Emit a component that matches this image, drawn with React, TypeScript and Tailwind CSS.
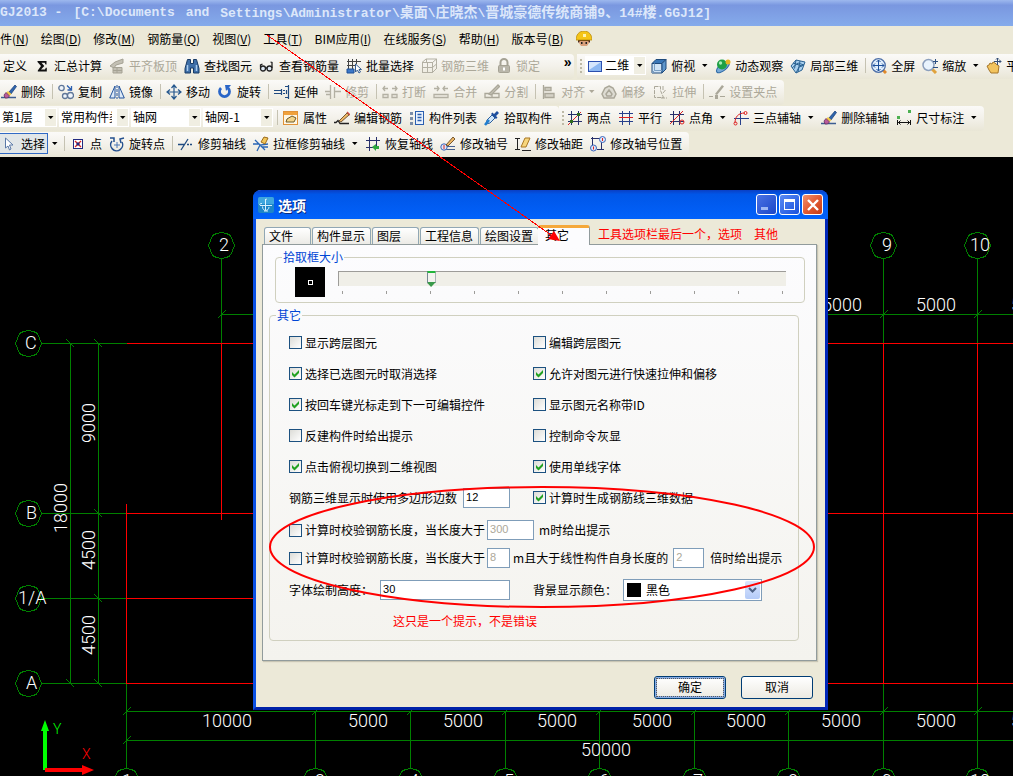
import React, { useState } from "react";
import clsx from "clsx";

const icons: Record<string, React.ReactNode> = {
  sigma: <path d="M3.500 3h9v3.500h-1l-.8-1.700H7.500L10.300 8l-3.300 3.500h4l.8-1.800h1v3.800h-9v-1L7 8 3.500 4z" fill="#111" />,
  align: (
    <g fill="#c3c0b4" stroke="#a5a294">
      <path d="M1 8l5-4 8-3v4L7 7l-2 3z" />
      <path d="M4 9.500h9v5.500H4zM4 12.500h9M8 10v5" />
    </g>
  ),
  binoculars: (
    <g fill="#3f6fa8" stroke="#173a66">
      <path d="M3.500 1.500h3v4h3v-4h3l2.500 9V15h-5.500v-5h-3v5H1v-4.500z" />
      <path d="M3.500 7v6M12.500 7v6" stroke="#a8cbee" strokeWidth="1.500" />
    </g>
  ),
  glasses: (
    <g fill="#dfe9f4" stroke="#222" strokeWidth="1.300">
      <circle cx="4" cy="10.500" r="2.500" />
      <circle cx="10.500" cy="10.500" r="2.500" />
      <path d="M6.500 10h2M1.500 9.500V7l2-1M13 10V4.500L11.500 4" fill="none" />
    </g>
  ),
  batch: (
    <g fill="none" stroke="#444">
      <path d="M2.500 1v14M6.500 1v10M10.500 1v5M1 3.500h14M1 7.500h9M1 11.500h7" />
      <path d="M1 11h7v4H1z" fill="#3c78c8" stroke="#1d4e96" />
      <path d="M9.500 6v8l2-2 1.500 3 1.500-1-1.500-2.500h2.500z" fill="#fff" stroke="#345c90" />
    </g>
  ),
  rebar3d: <path d="M1.500 4v11M6.500 4v11M11.500 4v11M15.500 1v10M5.500 1v3M1 4.500h10.500l4-3.500H5L1 4.500M1 9.500h10.500l4-3.500M1 14.500h10.500l4-4" fill="none" stroke="#b3b0a3" />,
  lock: (
    <g stroke="#a5a294">
      <path d="M4.500 8V4.500a3.500 3.500 0 017 0V8" fill="none" strokeWidth="2" />
      <rect x="2.500" y="7.500" width="11" height="7" rx="1" fill="#b9b6aa" />
      <path d="M8 9.500v3" stroke="#fff" strokeWidth="2" />
    </g>
  ),
  plane: (
    <>
      <rect x="1.500" y="3.500" width="13" height="10" fill="#8db8f2" stroke="#2b4fae" />
      <path d="M2 4h12L2 12z" fill="#d6e6fc" />
    </>
  ),
  cube: (
    <g stroke="#1e4a7c">
      <path d="M1 5.500h10V15H1z" fill="#cfe3f5" />
      <path d="M1 5.500L5 1.500h10l-4 4z" fill="#3a78b8" />
      <path d="M11 5.500l4-4V11l-4 4z" fill="#5f97cc" />
      <path d="M3.500 5.500V12.500H11M3.500 12.500L1 15" fill="none" stroke="#7aa0c4" />
    </g>
  ),
  orbit: (
    <>
      <ellipse cx="8" cy="9" rx="8" ry="3.500" transform="rotate(-40 8 9)" fill="#77a9d8" stroke="#2f6aa5" />
      <circle cx="7" cy="6.500" r="5" fill="#1fa045" />
      <circle cx="5.500" cy="5" r="1.700" fill="#a7ecb7" />
      <circle cx="13" cy="4" r="2.500" fill="#e6b422" />
    </>
  ),
  part3d: (
    <g fill="#a9d0ef" stroke="#2a6292">
      <path d="M1 8l5-6 9 2-3 8-6 3z" />
      <path d="M6 2L4.500 10.500M10 3L8 14M3 5l9 3M2 10l6-5 6 2M6 15l3-6 5-2" fill="none" />
    </g>
  ),
  fullscreen: (
    <>
      <path d="M12 12l3 3" stroke="#e08a2c" strokeWidth="3" />
      <circle cx="7.500" cy="7.500" r="6.800" fill="#e2effc" stroke="#4d6fa8" strokeWidth="1.300" />
      <path d="M7.500 2v11M2 7.500h11M5.500 4l2-2 2 2M5.500 11l2 2 2-2M4 5.500l-2 2 2 2M11 5.500l2 2-2 2" fill="none" stroke="#1d4f9a" />
    </>
  ),
  zoom: (
    <>
      <path d="M10 11l4 4" stroke="#e0a23c" strokeWidth="3" />
      <circle cx="6.500" cy="7" r="5.500" fill="#e9f3fd" stroke="#8c9fbd" strokeWidth="1.500" />
      <path d="M11 3.500h5M13.500 1v5M11 9.500h5" stroke="#2c4f82" />
    </>
  ),
  pan: (
    <>
      <path d="M1 8l2-1 1-2 2 1 1-2 2 1 1 1 3 2-1 7H5l-2-3z" fill="#f3c45e" stroke="#a5762a" />
      <path d="M11.500 0v7M8 3.500h7M10 1.500L11.500 0 13 1.500M13.500 2L15 3.500 13.500 5" fill="none" stroke="#334d75" />
    </>
  ),
  brush: (
    <>
      <path d="M0 13.500h15" stroke="#3d5d92" strokeWidth="1.500" />
      <path d="M8 8L14 1l1.500 1.500L10 10z" fill="#2e65ad" stroke="#173a72" strokeWidth=".7" />
      <path d="M7 7l3.500 3-2 2L5 9z" fill="#f1c84a" />
      <path d="M5 8.500l3.500 3.500-2 2H4L3 11z" fill="#b85a9c" stroke="#5b2450" strokeWidth=".7" />
    </>
  ),
  copy: (
    <g fill="#eef4fb" stroke="#5f7698" strokeWidth="1.300">
      <circle cx="3.500" cy="4" r="2.700" />
      <circle cx="7" cy="12" r="2.500" />
      <circle cx="12.500" cy="11.500" r="3" />
      <path d="M9 1.500l4 4M13.500 2v4h-4" fill="none" stroke="#2c5fb0" />
    </g>
  ),
  mirror: (
    <g fill="#dce9f8" stroke="#23539c">
      <path d="M6 2v12H.7zM10 2v12h5.300z" />
      <path d="M8 1v14" strokeDasharray="3 1" />
    </g>
  ),
  move: <path d="M8 1v14M1 8h14M5.500 4L8 1l2.500 3M5.500 12L8 15l2.500-3M4 5.500L1 8l3 2.500M12 5.500L15 8l-3 2.500" fill="none" stroke="#26588e" strokeWidth="1.200" />,
  rotate: (
    <>
      <path d="M4 4a5 5 0 107 0" fill="none" stroke="#2a66c8" strokeWidth="2.800" />
      <path d="M8 1h6l-5 6z" fill="#2a66c8" />
    </>
  ),
  extend: <path d="M0 6.500h7M0 9.500h7M7.500 5v6M9 6.500h2M9 9.500h2M12.500 6v4M14.500 1v14M11 2.500h3M11 13.500h3" fill="none" stroke="#1f4a80" strokeWidth="1.200" />,
  trim: <path d="M0 7.500h6M10 7.500h6M5.500 1v14M9.500 3v11M1 10.500h4" fill="none" stroke="#b3b0a3" strokeWidth="1.300" />,
  split: <path d="M1 4.500h5M3 2L1 4.500 3 7M10 4.500h5M13 2l2 2.500L13 7M1 10.500h5v3H1zM10 10.500h5v3h-5z" fill="none" stroke="#b3b0a3" strokeWidth="1.300" />,
  merge: <path d="M1 4.500h5M4 2l2 2.500L4 7M10 4.500h5M12 2l-2 2.500L12 7M1 10.500h14v3H1z" fill="none" stroke="#b3b0a3" strokeWidth="1.300" />,
  divide: (
    <g fill="none" stroke="#aaa799" strokeWidth="1.300">
      <path d="M1 9.500h14v4H1zM8 7v7" />
      <path d="M5 10l9-9 1.500 1.500L7 11z" fill="#c9c6ba" />
    </g>
  ),
  alignTo: <path d="M2.500 1v14M4 3.500h6v3H4zM4 9.500h9v4H4z" fill="#d5d2c7" stroke="#aaa799" strokeWidth="1.300" />,
  offset: (
    <g fill="none" stroke="#aaa799" strokeWidth="1.500">
      <path d="M8 2l4 2 3 6-2 4H3l-2-4 3-6z" fill="#dddbd2" />
      <path d="M8 6l3 4-1 2H6l-1-2z" />
    </g>
  ),
  stretch: <path d="M2.500 2.500h6v4l3 7h-9zM11 2v5M13.500 6l-2.500 3M9 14h6" fill="none" stroke="#aaa799" strokeDasharray="4 1" />,
  grip: (
    <g fill="#aaa799">
      <path d="M6 10l7-9 2 1.500L8 11z" />
      <path d="M0 12h4v1H0zM11 12h5v1h-5zM6 11h3v4H6z" />
    </g>
  ),
  property: (
    <>
      <rect x=".5" y="1.500" width="14" height="13" fill="#fff6e3" stroke="#e09238" />
      <path d="M1 2h13v3H1z" fill="#f0a13c" />
      <path d="M3 12l1-3 5-3 4 2-2 4H7z" fill="#f3d489" stroke="#6d5a2d" />
    </>
  ),
  editRebar: (
    <>
      <path d="M0 12.500h2l2-2 2 3h9" fill="none" stroke="#222" strokeWidth="1.300" />
      <path d="M5 11l8-8 2 2-8 7z" fill="#eeb765" stroke="#553a16" strokeWidth=".8" />
      <path d="M13 2l3 3" stroke="#c84f45" strokeWidth="1.500" />
    </>
  ),
  list: (
    <>
      <path d="M1 2h3v3H1zM1 7h3v3H1zM1 12h3v3H1z" fill="#7b8da8" />
      <rect x="6.500" y="1.500" width="8" height="13" fill="#eaf2fd" stroke="#2b5fb0" />
      <path d="M8.500 4.500h4M8.500 7.500h4M8.500 10.500h4" stroke="#2b5fb0" strokeWidth="1.500" />
    </>
  ),
  picker: (
    <>
      <path d="M2 14l1-4 5-5 3 3-5 5z" fill="#cfe5fa" stroke="#2c5f9c" />
      <path d="M7 4l5 5 1.500-1.500L12 6l3-3-2-2-3 3-1.500-1.500z" fill="#1f4f9e" />
      <path d="M1 15l4-5" stroke="#1f7ed0" strokeWidth="2.500" />
    </>
  ),
  twoPoint: (
    <g fill="none" stroke="#27306b">
      <path d="M4.500 1v14M11.500 1v14M1 4.500h14M1 11.500h14" />
      <path d="M1 15L14 2" stroke="#d22" />
      <path d="M10 3h3v3h-3zM3 10h3v3H3z" fill="#2f6a1f" stroke="none" />
    </g>
  ),
  parallel: (
    <g fill="none" stroke="#27408b">
      <path d="M4.500 1v14M11.500 1v14M1 11.500h14M1 3.500h14" />
      <path d="M1 7.500h14" stroke="#d22" />
    </g>
  ),
  pointAngle: (
    <g fill="none" stroke="#27306b">
      <path d="M4.500 1v14M10.500 1v14M1 4.500h14M1 11.500h14" />
      <path d="M1 14L14 1" stroke="#d22" />
      <circle cx="13" cy="12" r="2" stroke="#d22" />
    </g>
  ),
  threePoint: (
    <g fill="none" stroke="#27408b">
      <path d="M7.500 1v14M1 8.500h15" />
      <path d="M2 13c0-6 3-10 10-10" stroke="#d22" />
      <circle cx="2.500" cy="13.500" r="1.500" stroke="#d22" />
      <circle cx="12.500" cy="3" r="1.500" stroke="#d22" />
    </g>
  ),
  dimension: (
    <>
      <path d="M1 6h3v3H1zM12 0h3v3h-3z" fill="#4cb050" />
      <path d="M1.500 10v5M14.500 10v5M2 12.500h12M4.500 10.500l-2 2 2 2M11.500 10.500l2 2-2 2" fill="none" stroke="#111" />
    </>
  ),
  cursor: <path d="M4.500 2v10l2.500-2L8.500 14l1.500-1L8.500 9H12z" fill="#fff" stroke="#5a79a8" />,
  point: (
    <>
      <rect x="3.500" y="3.500" width="9" height="9" fill="#fff" stroke="#222a80" />
      <path d="M5 5l6 6M11 5l-6 6" stroke="#d22" strokeWidth="1.300" />
      <path d="M6.500 6.500h3v3h-3z" fill="#222a80" />
    </>
  ),
  rotatePoint: (
    <g fill="none" stroke="#24508f" strokeWidth="1.500">
      <path d="M3 5a6 6 0 1010 1" />
      <path d="M1 2h4v4M15 2l-4 1 1 4" />
      <path d="M8 6v6M5 9h6" stroke="#4a77b5" strokeWidth="1" />
    </g>
  ),
  trimAxis: (
    <g fill="none" stroke="#1f4a80" strokeWidth="1.300">
      <path d="M0 8.500h6M3 14L10 3" />
      <path d="M9 8.500h6" strokeDasharray="2 1" />
    </g>
  ),
  boxTrim: (
    <>
      <path d="M0 8h6l6 6M4 15l3-6 8-1M2 4l5 5M9 11h6" fill="none" stroke="#2a66b5" strokeWidth="1.300" />
      <path d="M8 6l3-5 4 1-3 6z" fill="#f2c659" stroke="#9b6a1b" />
    </>
  ),
  restore: (
    <>
      <path d="M4.500 1v14M11.500 1v9M1 4.500h14M1 11.500h8" fill="none" stroke="#27306b" />
      <path d="M7 11l4-3v2h3v3h-3v2z" fill="#2da83e" />
    </>
  ),
  axisNo: (
    <>
      <path d="M3 13.500h12M7 10.500h8" stroke="#46618f" />
      <circle cx="4" cy="11" r="3.200" fill="#dce8fa" stroke="#3c65b8" />
      <path d="M4 9v4" stroke="#d22" />
      <path d="M6 9l7-8 2 2-7 7z" fill="#eeb765" stroke="#553a16" strokeWidth=".8" />
    </>
  ),
  axisGap: (
    <>
      <path d="M2.500 2v12M0 2.500h5M0 13.500h5M7 14.500h9" stroke="#222" />
      <path d="M6 11l4-9h5l-4 9z" fill="#f7d67c" stroke="#a97722" />
    </>
  ),
  axisPos: (
    <g fill="#dce8fa" stroke="#3c65b8">
      <path d="M2.500 1v9M1 2.500h10M11.500 5v9M7 13.500h7" stroke="#27306b" />
      <circle cx="12.500" cy="3.500" r="3" />
      <circle cx="3.500" cy="12" r="3" />
      <path d="M12.500 2v3M3.500 10.500v3" stroke="#d22" />
    </g>
  ),
};

const Icon = ({ name }: { name: string }) => (
  <svg viewBox="0 0 16 16" className="h-4 w-4 shrink-0" aria-hidden="true">
    {icons[name]}
  </svg>
);

const Caret = ({ muted }: { muted?: boolean }) => (
  <svg viewBox="0 0 6 4" className={clsx("h-1 w-1.5 shrink-0", muted ? "fill-[#aca899]" : "fill-black")} aria-hidden="true">
    <path d="M0 0h5.500L2.750 3z" />
  </svg>
);

interface ToolProps {
  icon?: string;
  label: string;
  disabled?: boolean;
  menu?: boolean;
}
const Tool = ({ icon, label, disabled, menu }: ToolProps) => (
  <button disabled={disabled} className={clsx("mr-[7px] flex shrink-0 items-center gap-1 whitespace-nowrap", disabled && "text-[#aca899]")}>
    {icon && <Icon name={icon} />}
    {label}
    {menu && (
      <span className={disabled ? "-mr-px" : "ml-[3px]"}>
        <Caret muted={disabled} />
      </span>
    )}
  </button>
);

const Sep = () => <span className="mr-[5px] h-[15px] w-px shrink-0 bg-[#c5c2b2]" />;

const Grip = () => (
  <span className="mx-[3px] flex shrink-0 flex-col gap-0.5">
    {[0, 1, 2, 3].map((i) => (
      <span key={i} className="h-0.5 w-0.5 bg-[#bdb9a6]" />
    ))}
  </span>
);

const Combo = ({ label, value, className, icon }: { label: string; value: string; className: string; icon?: string }) => (
  <div className={clsx("relative flex h-[19px] shrink-0 items-center bg-white", className)}>
    {icon && (
      <span className="ml-0.5">
        <Icon name={icon} />
      </span>
    )}
    <select aria-label={label} className="h-full min-w-0 flex-1 appearance-none overflow-hidden pr-[17px] pb-0.5 pl-0.5">
      <option>{value}</option>
    </select>
    <span className="pointer-events-none absolute inset-y-px right-px flex w-[11px] items-center justify-center bg-[#f0eee2]">
      <Caret />
    </span>
  </div>
);

const Bar = ({ children, className }: { children: React.ReactNode; className?: string }) => (
  <div className={clsx("flex h-[25px] shrink-0 items-center bg-linear-to-b from-[#fbfaf8] via-[#f3f1ea] to-[#e9e6d6] pb-0.5", className)}>
    {children}
  </div>
);

const menus = ["件(N)", "绘图(D)", "修改(M)", "钢筋量(Q)", "视图(V)", "工具(T)", "BIM应用(I)", "在线服务(S)", "帮助(H)", "版本号(B)"];

const MenuLabel = ({ text }: { text: string }) => {
  const at = text.indexOf("(");
  return (
    <>
      {text.slice(0, at)}(<span className="underline">{text[at + 1]}</span>)
    </>
  );
};

const AppHeader = () => (
  <header className="bg-[#ece9d8]">
    <h1 className="flex h-[26px] items-center gap-[11px] overflow-hidden bg-linear-to-b from-[#9db8ee] via-[#7a97e0] via-20% to-[#85abeb] font-['Liberation_Mono','Noto_Sans_CJK_SC',monospace] text-[13px] font-bold whitespace-nowrap text-[#dce7fa]">
      <span>GJ2013 -</span>
      <span>[C:\Documents</span>
      <span>and</span>
      <span>
        Settings\Administrator\<span className="text-[14px]">桌面</span>\<span className="text-[14px]">庄晓杰</span>\
        <span className="text-[14px]">晋城豪德传统商铺</span>9<span className="text-[14px]">、</span>14#
        <span className="text-[14px]">楼</span>.GGJ12]
      </span>
    </h1>
    <nav className="flex h-[27px] items-center gap-3 pb-0.5 whitespace-nowrap">
      {menus.map((m) => (
        <button key={m}>
          <MenuLabel text={m} />
        </button>
      ))}
      <svg viewBox="0 0 16 16" className="h-4 w-4" aria-hidden="true">
        <path d="M3 8h10v4l-2 3H5l-2-3z" fill="#d9a07c" />
        <path d="M2 8h12v4l-2-2H4l-2 2z" fill="#4a2a1a" />
        <path d="M0 9c0-5 3-9 8-9s8 4 8 9z" fill="#f5c518" stroke="#b98a0c" strokeWidth=".8" />
        <path d="M7 3h3v3H7z" fill="#fff3b0" />
        <path d="M5 11h1.500v2H5zM9.500 11H11v2H9.500z" fill="#222" />
      </svg>
    </nav>

    <div className="flex h-[26px] items-end overflow-hidden">
      <Bar className="rounded-r pl-[3px]">
        <Tool label="定义" />
        <Tool icon="sigma" label="汇总计算" />
        <Tool icon="align" label="平齐板顶" disabled />
        <Tool icon="binoculars" label="查找图元" />
        <Tool icon="glasses" label="查看钢筋量" />
        <Tool icon="batch" label="批量选择" />
        <Tool icon="rebar3d" label="钢筋三维" disabled />
        <Tool icon="lock" label="锁定" disabled />
        <button className="ml-3.5 w-[13px] pb-2 font-['Liberation_Sans',sans-serif] text-[14px] leading-4 font-bold">»</button>
      </Bar>
      <Bar className="ml-[3px]">
        <Grip />
        <Combo label="视图维度" value="二维" icon="plane" className="mr-[5px] w-[61px]" />
        <Tool icon="cube" label="俯视" menu />
        <Tool icon="orbit" label="动态观察" />
        <Tool icon="part3d" label="局部三维" />
        <Sep />
        <Tool icon="fullscreen" label="全屏" />
        <Tool icon="zoom" label="缩放" menu />
        <Tool icon="pan" label="平移" />
      </Bar>
    </div>

    <div className="flex h-[26px] items-end overflow-hidden">
      <Bar className="rounded-r pl-px">
        <Tool icon="brush" label="删除" />
        <Sep />
        <Tool icon="copy" label="复制" />
        <Tool icon="mirror" label="镜像" />
        <Sep />
        <Tool icon="move" label="移动" />
        <Tool icon="rotate" label="旋转" />
        <Sep />
        <Tool icon="extend" label="延伸" />
        <Tool icon="trim" label="修剪" disabled />
        <Sep />
        <Tool icon="split" label="打断" disabled />
        <Tool icon="merge" label="合并" disabled />
        <Tool icon="divide" label="分割" disabled />
        <Sep />
        <Tool icon="alignTo" label="对齐" disabled menu />
        <Tool icon="offset" label="偏移" disabled />
        <Tool icon="stretch" label="拉伸" disabled />
        <Sep />
        <Tool icon="grip" label="设置夹点" disabled />
      </Bar>
    </div>

    <div className="flex h-[26px] items-end overflow-hidden">
      <Bar className="rounded-r">
        <Combo label="楼层" value="第1层" className="mr-0.5 w-[57px]" />
        <Combo label="构件类型" value="常用构件类型" className="mr-0.5 w-[70px]" />
        <Combo label="构件" value="轴网" className="mr-0.5 w-[70px]" />
        <Combo label="构件名称" value="轴网-1" className="mr-1 w-[70px]" />
        <Sep />
        <Tool icon="property" label="属性" />
        <Tool icon="editRebar" label="编辑钢筋" />
        <Tool icon="list" label="构件列表" />
        <Tool icon="picker" label="拾取构件" />
      </Bar>
      <Bar className="rounded-r">
        <Grip />
        <Tool icon="twoPoint" label="两点" />
        <Tool icon="parallel" label="平行" />
        <Tool icon="pointAngle" label="点角" menu />
        <Tool icon="threePoint" label="三点辅轴" menu />
        <Tool icon="brush" label="删除辅轴" />
        <Tool icon="dimension" label="尺寸标注" menu />
      </Bar>
    </div>

    <div className="flex h-[26px] items-end overflow-hidden">
      <Bar className="rounded-r">
        <button className="flex h-[21px] items-center gap-1 border border-l-0 border-[#316ac5] bg-[#e1e6e8] pr-0.5 pl-px whitespace-nowrap">
          <Icon name="cursor" />
          选择
        </button>
        <button aria-label="选择方式" className="mr-1.5 flex h-5 w-2.5 items-center justify-end">
          <Caret />
        </button>
        <Sep />
        <Tool icon="point" label="点" />
        <Tool icon="rotatePoint" label="旋转点" />
        <Sep />
        <Tool icon="trimAxis" label="修剪轴线" />
        <Tool icon="boxTrim" label="拉框修剪轴线" menu />
        <Tool icon="restore" label="恢复轴线" />
        <Tool icon="axisNo" label="修改轴号" />
        <Tool icon="axisGap" label="修改轴距" />
        <Tool icon="axisPos" label="修改轴号位置" />
      </Bar>
    </div>
  </header>
);

const columns = [
  { x: 126, name: "1", labelX: 122 },
  { x: 315, name: "3", labelX: 315 },
  { x: 410, name: "4", labelX: 409 },
  { x: 505, name: "5", labelX: 504 },
  { x: 599, name: "6", labelX: 599 },
  { x: 694, name: "7", labelX: 693 },
  { x: 788, name: "8", labelX: 788 },
  { x: 883, name: "9", labelX: 882 },
  { x: 977, name: "10", labelX: 970 },
];
const rows = [
  { y: 343, name: "C", labelX: 25 },
  { y: 513, name: "B", labelX: 26 },
  { y: 598, name: "1/A", labelX: 18 },
  { y: 683, name: "A", labelX: 26 },
];

const Ring = ({ x, y }: { x: number; y: number }) => (
  <polygon
    points="0,-13 5,-12 9,-10 11,-5 13,0 11,5 9,10 5,12 0,13 -5,12 -9,10 -11,5 -13,0 -11,-5 -9,-10 -5,-12"
    transform={`translate(${x} ${y})`}
  />
);

const Drawing = () => (
  <svg className="absolute inset-0 h-full w-full" aria-label="轴网">
    <g transform="translate(0.5 -156.5)" fill="none" shapeRendering="crispEdges">
      <g stroke="#008000">
        {rows.map((r) => (
          <React.Fragment key={r.name}>
            <Ring x={28} y={r.y} />
            <path d={`M41 ${r.y}H126M94 ${r.y - 4}l8 8`} />
          </React.Fragment>
        ))}
        <path d="M70 343V683M98 343V683M66 339l8 8M66 679l8 8" />
        <path d="M126 683V711M126 711H2000M126 740H2000M122 744l8-8M221 314H2000" />
        {columns.map((c) => (
          <React.Fragment key={c.name}>
            <Ring x={c.x} y={781} />
            <path d={`M${c.x} 711V768M${c.x - 4} 715l8-8`} />
          </React.Fragment>
        ))}
        {[221, 883, 977].map((x) => (
          <React.Fragment key={x}>
            <Ring x={x} y={245} />
            <path d={`M${x} 258V343M${x - 4} 318l8-8`} />
          </React.Fragment>
        ))}
        <path d="M883 683V711M977 683V711" />
      </g>
      <path d="M126 343H2000M126 513H2000M126 598H600M126 683H2000M126 503V683M221 343V519M883 343V683M977 343V683" stroke="#ff0000" />
    </g>
    <g transform="translate(0 -157)">
      <g className="fill-white font-['Roboto',sans-serif] text-[18px] font-light">
        <text x="219" y="251">2</text>
        <text x="882" y="251">9</text>
        <text x="970" y="251">10</text>
        {rows.map((r) => (
          <text key={r.name} x={r.labelX} y={r.y + 6}>{r.name}</text>
        ))}
        {columns.map((c) => (
          <text key={c.name} x={c.labelX} y={787}>{c.name}</text>
        ))}
        <text x="822" y="311">5000</text>
        <text x="916" y="311">5000</text>
        <text x="1011" y="311">5000</text>
        <text x="202" y="727">10000</text>
        {[348, 443, 537, 632, 726, 821, 916, 1011].map((x) => (
          <text key={x} x={x} y="727">5000</text>
        ))}
        <text x="581" y="756">50000</text>
        <text transform="translate(95 443) rotate(-90)">9000</text>
        <text transform="translate(67 533) rotate(-90)">18000</text>
        <text transform="translate(95 570) rotate(-90)">4500</text>
        <text transform="translate(95 655) rotate(-90)">4500</text>
      </g>
      <path d="M43 770V731h-2l4-11 4 11h-2v39z" fill="#00ff00" />
      <path d="M45 768h37v-3l12 5-12 5v-3H45z" fill="#ff0000" />
      <text x="53" y="734" className="fill-[#00ff00] font-['Roboto',sans-serif] text-[14px] font-light">Y</text>
      <text x="82" y="759" className="fill-[#ff0000] font-['Roboto',sans-serif] text-[14px] font-light">X</text>
    </g>
  </svg>
);

const CheckItem = ({ label, defaultChecked }: { label: string; defaultChecked?: boolean }) => {
  const [checked, setChecked] = useState(!!defaultChecked);
  return (
    <label className="flex items-center gap-[3px] whitespace-nowrap">
      <span className="relative h-[13px] w-[13px] shrink-0">
        <input
          type="checkbox"
          checked={checked}
          onChange={(e) => setChecked(e.target.checked)}
          className="block h-[13px] w-[13px] appearance-none border border-[#1c5180] bg-linear-to-br from-[#dcdcd7] to-white"
        />
        {checked && (
          <svg viewBox="0 0 13 13" className="pointer-events-none absolute inset-0" aria-hidden="true">
            <path d="M3 5v3l2.500 2.500L10 6V3L5.500 7.500z" fill="#21a121" />
          </svg>
        )}
      </span>
      {label}
    </label>
  );
};

const options: [string, boolean, string, boolean][] = [
  ["显示跨层图元", false, "编辑跨层图元", false],
  ["选择已选图元时取消选择", true, "允许对图元进行快速拉伸和偏移", true],
  ["按回车键光标走到下一可编辑控件", true, "显示图元名称带ID", false],
  ["反建构件时给出提示", false, "控制命令灰显", false],
  ["点击俯视切换到二维视图", true, "使用单线字体", true],
];

const field =
  "h-5 border border-[#7f9db9] bg-white px-0.5 pb-0.5 font-['Liberation_Sans',sans-serif] text-[11px] disabled:text-[#aca899]";

const tabs = [
  { name: "文件", width: "w-[47px]" },
  { name: "构件显示", width: "w-[59px]" },
  { name: "图层", width: "w-[47px]" },
  { name: "工程信息", width: "w-[59px]" },
  { name: "绘图设置", width: "w-[59px]" },
];

const captionButton = "flex h-[21px] w-[21px] items-center justify-center rounded-[3px] border border-white";

const OptionsDialog = () => {
  const [pickSize, setPickSize] = useState(3);
  return (
    <div
      role="dialog"
      aria-label="选项"
      className="absolute top-[33px] left-[253px] w-[575px] rounded-t-lg border-x-[3px] border-b-[3px] border-t-0 border-r-[#0026b8] border-b-[#0022a8] border-l-[#0a50e4] bg-[#ece9d8]"
    >
      <div className="-mx-[3px] flex h-[29px] items-center rounded-t-lg bg-linear-to-b from-[#0a3fc4] via-[#0056e8] via-15% to-[#0262fb] pr-[5px] pl-[5px]">
        <svg viewBox="0 0 16 16" className="h-4 w-4" aria-hidden="true">
          <rect width="16" height="16" rx="2" fill="#1d86c8" />
          <path d="M0 2a2 2 0 012-2h12a2 2 0 012 2v5H0z" fill="#3fa6de" />
          <path d="M7.500 2v11M6 14h4M9 2.500c-1-1-2 0-1.500 1M2 8.500h12M4 6.500c-3 0-3 2-1 2M4.500 9.500c0 3 2 4 3 4s3.500-1 3.500-3.500" fill="none" stroke="#d8f2ff" />
        </svg>
        <h2 className="ml-1 flex-1 text-[14px] leading-5 font-bold text-white [text-shadow:1px_1px_0_#0a2a80]">选项</h2>
        <div className="flex gap-0.5">
          <button aria-label="最小化" disabled className={clsx(captionButton, "border-[#8fb0f0] bg-linear-to-br from-[#4a72e4] to-[#1c46c8]")}>
            <span className="mt-2 mr-1 h-[3px] w-[7px] bg-[#9db7f4]" />
          </button>
          <button aria-label="最大化" className={clsx(captionButton, "bg-linear-to-br from-[#5a8af4] to-[#1a50dc]")}>
            <span className="h-[11px] w-[11px] border border-t-[3px] border-white" />
          </button>
          <button aria-label="关闭" className={clsx(captionButton, "bg-linear-to-br from-[#f0906c] via-[#e25a32] to-[#c43a14]")}>
            <svg viewBox="0 0 12 12" className="h-3 w-3" aria-hidden="true">
              <path d="M1 1l10 10M11 1L1 11" stroke="#fff" strokeWidth="2.400" />
            </svg>
          </button>
        </div>
      </div>

      <div className="pr-2 pl-1.5">
        <div role="tablist" className="relative -mb-px flex h-[26px] items-end gap-px pl-0.5">
          {tabs.map((t) => (
            <button
              key={t.name}
              role="tab"
              aria-selected="false"
              className={clsx(
                "mb-px h-[17px] rounded-t-[3px] border border-b-0 border-[#91a7b4] bg-linear-to-b from-white to-[#ecebe6] pl-1 text-left whitespace-nowrap",
                t.width,
              )}
            >
              {t.name}
            </button>
          ))}
          <button
            role="tab"
            aria-selected="true"
            className="-ml-0.5 h-5 w-[52px] rounded-t-[3px] border-t-[3px] border-r border-t-[#f5a83a] border-r-[#919b9c] bg-[#fcfcfe] pb-1 pl-[7px] text-left whitespace-nowrap"
          >
            其它
          </button>
          <p className="mb-1 pl-[7px] whitespace-nowrap text-[#ff0000]">工具选项栏最后一个，选项　其他</p>
        </div>

        <div
          role="tabpanel"
          className="border border-[#919b9c] bg-linear-to-b from-[#fcfcfe] to-[#f4f3ee] pt-[5px] pr-[11px] pb-[19px] pl-1.5 shadow-[1px_1px_1px_#c8c5b4]"
        >
          <fieldset className="ml-1.5 h-[53px] min-w-0 rounded border border-[#d0d0bf] pl-[19px]">
            <legend className="-ml-[13px] px-px leading-[14px] text-[#0046d5]">拾取框大小</legend>
            <div className="flex pt-[7px]">
              <div className="-mt-1 flex h-[30px] w-[30px] items-center justify-center bg-black">
                <span className="h-[5px] w-[5px] border border-white" />
              </div>
              <div className="mr-[18px] ml-[13px] flex-1">
                <input
                  type="range"
                  aria-label="拾取框大小"
                  min={1}
                  max={11}
                  value={pickSize}
                  onChange={(e) => setPickSize(Number(e.target.value))}
                  className="block h-[15px] w-full appearance-none border-t border-l border-[#9d9c99] bg-[#f0efe8] [&::-webkit-slider-thumb]:h-4 [&::-webkit-slider-thumb]:w-[9px] [&::-webkit-slider-thumb]:appearance-none [&::-webkit-slider-thumb]:border-x [&::-webkit-slider-thumb]:border-t-2 [&::-webkit-slider-thumb]:border-b-[5px] [&::-webkit-slider-thumb]:border-x-[#778892] [&::-webkit-slider-thumb]:border-t-[#21b53a] [&::-webkit-slider-thumb]:border-b-[#3a9a4a] [&::-webkit-slider-thumb]:bg-[#f3f3ef] [&::-webkit-slider-thumb]:[clip-path:polygon(0_0,100%_0,100%_70%,50%_100%,0_70%)]"
                />
                <div className="mt-[5px] flex justify-between pr-[3px] pl-1">
                  {Array.from({ length: 11 }, (_, i) => (
                    <span key={i} className="h-[3px] w-px bg-[#9d9c99]" />
                  ))}
                </div>
              </div>
            </div>
          </fieldset>

          <fieldset className="mt-[5px] mr-1.5 min-w-0 rounded border border-[#d0d0bf] pl-[19px]">
            <legend className="-ml-[13px] px-px leading-[14px] text-[#0046d5]">其它</legend>
            <div className="pt-[5px] pb-[9px]">
              {options.map(([left, leftOn, right, rightOn]) => (
                <div key={left} className="grid h-[31px] grid-cols-[244px_1fr] items-center">
                  <CheckItem label={left} defaultChecked={leftOn} />
                  <CheckItem label={right} defaultChecked={rightOn} />
                </div>
              ))}
              <div className="grid h-[31px] grid-cols-[244px_1fr] items-center">
                <label className="flex items-center gap-1.5 whitespace-nowrap">
                  钢筋三维显示时使用多边形边数
                  <input defaultValue="12" className={clsx(field, "w-[47px]")} />
                </label>
                <CheckItem label="计算时生成钢筋线三维数据" defaultChecked />
              </div>
              <div className="flex h-[34px] items-center whitespace-nowrap">
                <CheckItem label="计算时校验钢筋长度，当长度大于" />
                <input aria-label="长度上限" defaultValue="300" disabled className={clsx(field, "mr-[5px] ml-0.5 w-[47px]")} />
                m时给出提示
              </div>
              <div className="flex h-[22px] items-center whitespace-nowrap">
                <CheckItem label="计算时校验钢筋长度，当长度大于" />
                <input aria-label="长度下限" defaultValue="8" disabled className={clsx(field, "mr-[3px] ml-0.5 w-[23px]")} />
                m且大于线性构件自身长度的
                <input aria-label="倍数" defaultValue="2" disabled className={clsx(field, "mr-1.5 ml-[5px] w-[31px]")} />
                倍时给出提示
              </div>
              <div className="grid h-[42px] grid-cols-[244px_1fr] items-center">
                <label className="flex items-center gap-[7px] whitespace-nowrap">
                  字体绘制高度：
                  <input defaultValue="30" className={clsx(field, "w-[130px]")} />
                </label>
                <label className="flex items-center gap-1.5 whitespace-nowrap">
                  背景显示颜色：
                  <span className="relative block h-[22px] w-[139px]">
                    <select className="h-full w-full appearance-none border border-[#7f9db9] bg-white pl-[22px]">
                      <option>黑色</option>
                    </select>
                    <span className="pointer-events-none absolute top-1 left-1 h-3.5 w-3.5 bg-black" />
                    <span className="pointer-events-none absolute top-0.5 right-0.5 flex h-[18px] w-[15px] items-center justify-center rounded-xs bg-linear-to-b from-[#dbe6fd] to-[#b4cbf8]">
                      <svg viewBox="0 0 9 6" className="h-1.5 w-[9px]" aria-hidden="true">
                        <path d="M1 1l3.500 3.500L8 1" fill="none" stroke="#4d6185" strokeWidth="2" />
                      </svg>
                    </span>
                  </span>
                </label>
              </div>
              <p className="pl-[104px] leading-5 text-[#ff0000]">这只是一个提示，不是错误</p>
            </div>
          </fieldset>
        </div>

        <div className="flex justify-end gap-[15px] pt-[15px] pr-1 pb-2">
          <button className="h-[23px] w-[72px] rounded-[3px] border border-[#003c74] bg-linear-to-b from-white to-[#eceae2] p-px shadow-[inset_0_0_0_2px_#89ade4]">
            <span className="flex h-full items-center justify-center border border-dotted border-[#5a5a5a] pb-0.5">确定</span>
          </button>
          <button className="h-[23px] w-[72px] rounded-[3px] border border-[#003c74] bg-linear-to-b from-white to-[#eceae2] pb-0.5">取消</button>
        </div>
      </div>
    </div>
  );
};

const Markup = () => (
  <svg className="pointer-events-none absolute inset-0 h-full w-full" aria-hidden="true">
    <path d="M267 35L551 235" stroke="#ff0000" shapeRendering="crispEdges" />
    <path d="M560 241l-12-2 6-8z" fill="#ff0000" />
    <ellipse cx="542" cy="547" rx="272" ry="60" fill="none" stroke="#ff0000" strokeWidth="2" />
  </svg>
);

const App = () => {
  return (
    <div className="relative flex min-h-screen flex-col overflow-hidden bg-black font-['Noto_Sans_CJK_SC',sans-serif] text-[12px] leading-[14px] text-black">
      <AppHeader />
      <main className="relative min-h-[600px] flex-1 overflow-hidden">
        <Drawing />
        <OptionsDialog />
      </main>
      <Markup />
    </div>
  );
};

export default App;
